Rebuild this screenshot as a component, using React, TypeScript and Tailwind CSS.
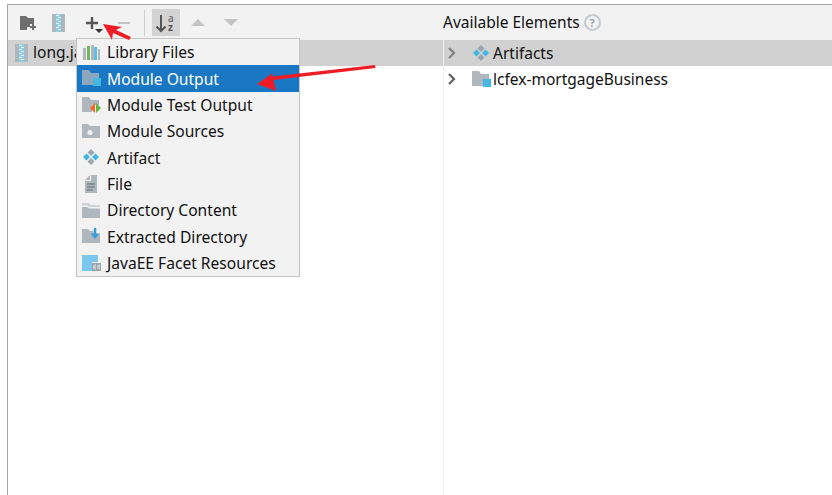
import * as React from "react";

const GREY = "#aeb7be";

function ModuleFolder({ tint = GREY }: { tint?: string }) {
  return (
    <svg width="20" height="18" viewBox="0 0 20 18">
      <path d="M1 1h7l2 3h8v12H1z" fill={tint} />
      <rect x="12" y="9" width="8" height="8" fill="#45b5e2" />
    </svg>
  );
}

function ArtifactIcon() {
  return (
    <svg width="18" height="18" viewBox="0 0 18 18">
      <path d="M9 1l3.500 3.500L9 8 5.500 4.500z" fill="#9aa7b0" />
      <path d="M4.500 5.500L8 9l-3.500 3.500L1 9z" fill="#40b6e0" />
      <path d="M13.500 5.500L17 9l-3.500 3.500L10 9z" fill="#40b6e0" />
      <path d="M9 10l3.500 3.500L9 17l-3.500-3.500z" fill="#9aa7b0" />
    </svg>
  );
}

function JarIcon() {
  return (
    <svg width="13" height="18" viewBox="0 0 13 18">
      <rect width="13" height="18" fill={GREY} />
      <rect x="4" width="5" height="18" fill="#8ccfe6" />
      <path d="M4 1.500h3M6 3.500h3M4 5.500h3M6 7.500h3M4 9.500h3M6 11.500h3M4 13.500h3M6 15.500h3" stroke="#e3f3f9" strokeWidth="1" />
    </svg>
  );
}

const menuItems: { label: string; icon: React.ReactNode; active?: boolean }[] = [
  {
    label: "Library Files",
    icon: (
      <svg width="20" height="18" viewBox="0 0 20 18">
        <rect x="2" y="5" width="3" height="12" fill={GREY} />
        <rect x="6" y="3" width="3" height="14" fill="#74b85a" />
        <rect x="10" y="2" width="3" height="15" fill={GREY} />
        <rect x="13" y="4" width="3" height="13" fill="#5fbde4" />
        <rect x="17" y="6" width="2" height="11" fill={GREY} />
      </svg>
    ),
  },
  { label: "Module Output", icon: <ModuleFolder tint="#8ba6bd" />, active: true },
  {
    label: "Module Test Output",
    icon: (
      <svg width="20" height="18" viewBox="0 0 20 18">
        <path d="M1 1h7l2 3h8v5h-7v7H1z" fill={GREY} />
        <path d="M14 7v10l-5-5z" fill="#f26522" />
        <path d="M15 7v10l5-5z" fill="#62b543" />
      </svg>
    ),
  },
  {
    label: "Module Sources",
    icon: (
      <svg width="20" height="18" viewBox="0 0 20 18">
        <path d="M1 2h6l2 2h10v12H1z" fill={GREY} />
        <circle cx="9" cy="10.500" r="2.500" fill="#f2f2f2" />
      </svg>
    ),
  },
  { label: "Artifact", icon: <ArtifactIcon /> },
  {
    label: "File",
    icon: (
      <svg width="20" height="18" viewBox="0 0 20 18">
        <path d="M9 0v5H4z" fill={GREY} />
        <path d="M10 0h6v18H4V6h6z" fill={GREY} />
        <path d="M6 9h8M6 12h8M6 15h6" stroke="#5f6b73" strokeWidth="1" />
      </svg>
    ),
  },
  {
    label: "Directory Content",
    icon: (
      <svg width="20" height="18" viewBox="0 0 20 18">
        <path d="M1 2h7l2 2h9v2H8L6 4.500H1z" fill="#cdd3d7" />
        <path d="M1 6h5l2 1.500h11V17H1z" fill={GREY} />
      </svg>
    ),
  },
  {
    label: "Extracted Directory",
    icon: (
      <svg width="20" height="18" viewBox="0 0 20 18">
        <path d="M1 2h6l2 2h3l2 6 5-4v10H1z" fill={GREY} />
        <path d="M14 1v7" stroke="#389fd6" strokeWidth="2.500" />
        <path d="M9.500 6.500h9L14 12z" fill="#389fd6" />
      </svg>
    ),
  },
  {
    label: "JavaEE Facet Resources",
    icon: (
      <svg width="20" height="18" viewBox="0 0 20 18">
        <path d="M1 1h16v7h-6v9H1z" fill="#79c7ec" />
        <rect x="11" y="9" width="9" height="8" fill="#98a3ab" />
        <path d="M13 11v4M14 11h1M14 13h1M14 15h1M17 11v4M18 11h1M18 13h1M18 15h1" stroke="#f2f2f2" strokeWidth="1" />
      </svg>
    ),
  },
];

function Chevron({ muted }: { muted?: boolean }) {
  return (
    <svg width="10" height="12" viewBox="0 0 10 12" className="shrink-0">
      <path d="M2 1l5 5-5 5" fill="none" stroke={muted ? "#808080" : "#606060"} strokeWidth="2.200" />
    </svg>
  );
}

function RedArrow({ d }: { d: string }) {
  return <path d={d} fill="#ee1c25" />;
}

export default function App() {
  return (
    <div className="relative h-[495px] w-[832px] overflow-hidden bg-white pt-[4px] font-['Noto_Sans',sans-serif] text-[15.5px] text-[#111]">
      <div className="ml-[7px] flex h-[491px] border-l border-t border-[#a3a3a3]">
        {/* left side */}
        <div className="w-[435px] shrink-0">
          <div className="flex h-[35px] items-center bg-[#f2f2f2] pl-[11px]">
            <svg width="18" height="16" viewBox="0 0 18 16">
              <path d="M1 1h6l2 2h6v6h-4v3H8v3H1z" fill="#6e6e6e" />
              <path d="M14 9v6M11 12h6" stroke="#6e6e6e" strokeWidth="2" />
            </svg>
            <div className="ml-[15px] flex">
              <JarIcon />
            </div>
            <div className="relative ml-[20px] h-[18px] w-[18px]">
              <svg width="18" height="18" viewBox="0 0 18 18">
                <path d="M7 3v12M1 9h12" stroke="#555" strokeWidth="2.400" />
              </svg>
              <div className="absolute left-[10px] top-[15px] h-0 w-0 border-x-[4px] border-t-[4px] border-x-transparent border-t-[#333]" />
            </div>
            <div className="ml-[15px] h-[2px] w-[12px] bg-[#c4c4c4]" />
            <div className="ml-[14px] h-[26px] w-px bg-[#cfcfcf]" />
            <div className="ml-[7px] flex h-[27px] w-[28px] items-center justify-center bg-[#d3d3d3]">
              <svg width="22" height="22" viewBox="0 0 22 22">
                <path d="M6 3v16M1.500 14.500L6 19l4.500-4.500" fill="none" stroke="#555" strokeWidth="2" />
                <text x="13" y="10" fontSize="10" fontFamily="Noto Sans" fill="#555">a</text>
                <text x="13" y="19" fontSize="10" fontFamily="Noto Sans" fontWeight="700" fill="#555">z</text>
              </svg>
            </div>
            <div className="ml-[11px] h-0 w-0 border-x-[7px] border-b-[7px] border-x-transparent border-b-[#c4c4c4]" />
            <div className="ml-[19px] h-0 w-0 border-x-[7px] border-t-[7px] border-x-transparent border-t-[#c4c4c4]" />
          </div>
          <div className="flex h-[26px] items-center gap-[5px] bg-[#d1d1d1] pl-[7px]">
            <JarIcon />
            <span>long.jar</span>
          </div>
        </div>

        {/* right side */}
        <div className="min-w-0 flex-1 border-l border-[#efefef]">
          <div className="flex h-[35px] items-center gap-[4px] bg-[#f2f2f2]">
            <span className="-ml-px">Available Elements</span>
            <div className="flex h-[17px] w-[17px] items-center justify-center rounded-full border-2 border-[#c3cbd0] text-[11px] font-bold leading-none text-[#9aa7b0]">
              ?
            </div>
          </div>
          <div className="flex h-[26px] items-center bg-[#d1d1d1] pl-[3px]">
            <Chevron muted />
            <div className="ml-[15px] flex">
              <ArtifactIcon />
            </div>
            <span className="ml-[3px] translate-y-px">Artifacts</span>
          </div>
          <div className="flex h-[26px] items-center pl-[3px]">
            <Chevron />
            <div className="ml-[14px] flex">
              <ModuleFolder />
            </div>
            <span className="ml-[2px] translate-y-px">lcfex-mortgageBusiness</span>
          </div>
        </div>
      </div>

      {/* popup menu */}
      <div className="absolute left-[76px] top-[38px] w-[224px] border border-[#c4c4c4] bg-[#f2f2f2] text-[15.6px]">
        {menuItems.map((item) => (
          <div
            key={item.label}
            className={`flex h-[26.3px] items-center gap-[6px] pl-[4px] ${item.active ? "bg-[#1a77c4] text-white" : ""}`}
          >
            <div className="flex w-[20px] shrink-0 justify-center">{item.icon}</div>
            <span className="translate-y-px">{item.label}</span>
          </div>
        ))}
      </div>

      {/* annotation arrows */}
      <svg width="832" height="495" viewBox="0 0 832 495" className="pointer-events-none absolute left-0 top-0">
        <RedArrow d="M103 24l19 3-6 3 15 7-2 3-16-7-1 7z" />
        <RedArrow d="M257 84l16-11-1 3.500 103-11.500 .5 3-102 12 2.500 11z" />
      </svg>
    </div>
  );
}
